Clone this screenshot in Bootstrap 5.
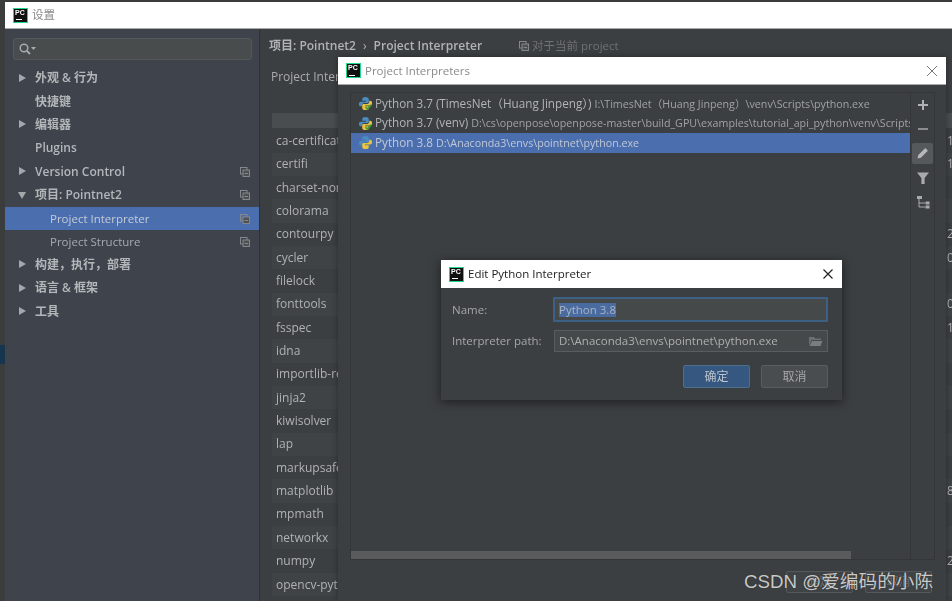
<!DOCTYPE html>
<html lang="zh">
<head>
<meta charset="utf-8">
<title>设置</title>
<link href="https://cdn.jsdelivr.net/npm/bootstrap@5.3.0/dist/css/bootstrap.min.css" rel="stylesheet">
<style>
html,body{height:100%;margin:0;overflow:hidden;background:#3b3d3d;}
body{font-family:"Open Sans","Noto Sans CJK SC",sans-serif;font-size:12px;color:#bbb;position:relative;}
.desk{position:absolute;inset:0;filter:blur(.35px);}
.edge{position:absolute;left:0;top:345px;width:5px;height:19px;background:#16364f;}
.win{position:absolute;left:5px;top:2px;right:0;bottom:0;display:flex;flex-direction:column;}
.ttl{height:27px;background:#fff;color:#8a8a8a;display:flex;align-items:center;padding-left:8px;gap:4px;font-size:11.5px;border-bottom:1px solid #aaa;flex:none;}
.pclogo{width:15px;height:15px;background:#111;border:1px solid #21d789;color:#fff;font:700 7px/8px "Liberation Sans",sans-serif;padding-left:1px;flex:none;position:relative;}
.pclogo::after{content:"";position:absolute;left:2px;bottom:1.5px;width:6px;height:1px;background:#fff;}
.winbody{flex:1;display:flex;min-height:0;}
.side{width:255px;background:#3e434c;border-right:1px solid #2f3133;flex:none;padding-top:9px;}
.srch{margin:0 7px 0 8px;height:22px;border:1px solid #55595c;border-radius:3px;background:#484c4d;display:flex;align-items:center;padding-left:4px;}
.tree{margin-top:6.5px;}
.tn{height:23.35px;display:flex;align-items:center;font-weight:600;color:#b4b7ba;position:relative;padding-left:30px;white-space:nowrap;}
.tn.sub{padding-left:45px;font-weight:400;font-size:11.5px;color:#a8abae;}
.tn.sel{background:#4b6eaf;color:#c4cbd6;}
.arr{position:absolute;left:14px;top:7px;width:0;height:0;border-left:7px solid #a5a8aa;border-top:4.5px solid transparent;border-bottom:4.5px solid transparent;}
.arr.dn{left:13px;top:9px;border-top:7px solid #a5a8aa;border-left:4.5px solid transparent;border-right:4.5px solid transparent;border-bottom:0;}
.cp{position:absolute;right:9px;top:7px;}
.main{flex:1;background:#3c3f41;min-width:0;overflow:hidden;}
.crumb{height:33px;display:flex;align-items:center;padding-left:9px;font-weight:600;color:#b0b2b3;white-space:nowrap;}
.crumb .gt{margin:0 7px;font-weight:400;}
.crumb .hint{font-weight:400;color:#6f7274;margin-left:37px;display:flex;align-items:center;gap:3px;font-size:11.5px;}
.pi{padding-left:11px;height:29px;display:flex;align-items:center;color:#a9abad;}
.pkgs{margin:22px 0 0 12px;}
.phead{height:15px;background:#4a4d4f;margin-bottom:1.3px;}
.prow{height:23.35px;display:flex;align-items:center;padding-left:4px;color:#b0b2b3;white-space:nowrap;overflow:hidden;}
.prow:nth-child(even){background:#3f4345;}
.prow:nth-child(odd){background:#3c3f41;}
.pname{width:671px;flex:none;}
.dlg{position:absolute;background:#3c3f41;}
.dlg1{left:338px;top:57px;right:6px;bottom:0;box-shadow:0 0 6px rgba(0,0,0,.35);}
.dlg1 .ttl{height:28px;}
.xbtn{margin-left:auto;flex:none;}
.dbody{position:relative;height:calc(100% - 28px);padding:7px 11px 41px 12px;}
.lpanel{height:100%;border:1px solid #343638;display:flex;overflow:hidden;position:relative;}
.llist{flex:1;min-width:0;padding-top:1px;}
.irow{height:19.5px;display:flex;align-items:center;padding-left:7px;white-space:nowrap;overflow:hidden;color:#b2b4b5;gap:2px;font-size:11.7px;}
.irow svg{flex:none;}
.irow small{font-size:10.7px;color:#a0a2a3;margin-left:1px;}
.irow.sel{background:#4b6eaf;color:#c0c8d6;}
.irow.sel small{color:#c0c8d6;}
.tools{width:24px;border-left:1px solid #343638;flex:none;display:flex;flex-direction:column;align-items:center;padding-top:1px;}
.tb{width:21px;height:21px;display:flex;align-items:center;justify-content:center;margin-bottom:3.4px;border-radius:2px;}
.tb.on{background:#55595b;}
.hbar{position:absolute;left:0;bottom:0;width:500px;height:8px;background:#595b5d;}
.dlg2{left:441px;top:260px;width:401px;height:140px;box-shadow:0 2px 10px rgba(0,0,0,.55);}
.dlg2 .ttl{height:28px;color:#222;border-bottom:0;padding-left:8px;}
.form2{padding:9px 14px 0 11px;font-size:11.5px;}
.fl{display:flex;align-items:center;color:#a5a7a8;}
.fl label{width:101px;flex:none;margin:0;}
.nameinp{flex:1;height:25px;border:2px solid #3d6185;background:#45494a;display:flex;align-items:center;padding-left:4px;border-radius:1px;}
.nameinp span{color:#a9b4c4;background-color:#4a6b9f;line-height:14px;}
.pathinp{flex:1;height:22px;border:1px solid #5a5d5f;background:#45494a;display:flex;align-items:center;padding:0 4px;justify-content:space-between;color:#aeb0b1;margin-left:1px;}
.acts{display:flex;justify-content:flex-end;gap:11px;margin-top:13px;}
.dbtn{width:67px;height:23px;border-radius:2px;border:1px solid #5a5d5f;background:#4a4d4f;color:#a5a7a8;display:flex;align-items:center;justify-content:center;padding:0;font-size:12px;}
.dbtn.pri{background:#365880;border-color:#4c708c;color:#bbc4cc;}
.ghost{position:absolute;top:571px;width:67px;height:22px;border:1px solid #55585a;border-radius:2px;background:#404345;color:#6a6d6f;font-size:12px;display:flex;align-items:center;justify-content:center;}
.wm{position:absolute;left:744px;top:569px;font:18.7px/26px "Liberation Sans","Noto Sans CJK SC",sans-serif;color:#c9c9c9;text-shadow:0 0 1px #222;white-space:nowrap;}
</style>
</head>
<body>
<div class="desk">
<div class="edge"></div>
<div class="win">
 <div class="ttl"><div class="pclogo">PC</div><span>设置</span></div>
 <div class="winbody">
  <aside class="side">
   <div class="srch"><svg width="18" height="14" viewBox="0 0 18 14"><circle cx="6" cy="6" r="3.8" fill="none" stroke="#a8abad" stroke-width="1.5"/><path d="M9 9l3 3" stroke="#a8abad" stroke-width="1.8"/><path d="M13 5h5l-2.5 3z" fill="#a8abad"/></svg></div>
   <div class="tree">
    <div class="tn"><i class="arr"></i>外观 &amp; 行为</div>
    <div class="tn">快捷键</div>
    <div class="tn"><i class="arr"></i>编辑器</div>
    <div class="tn">Plugins</div>
    <div class="tn"><i class="arr"></i>Version Control<svg class="cp" width="10" height="10" viewBox="0 0 10 10"><use href="#cpy"/></svg></div>
    <div class="tn"><i class="arr dn"></i>项目: Pointnet2<svg class="cp" width="10" height="10" viewBox="0 0 10 10"><use href="#cpy"/></svg></div>
    <div class="tn sub sel">Project Interpreter<svg class="cp" width="10" height="10" viewBox="0 0 10 10"><use href="#cpy"/></svg></div>
    <div class="tn sub">Project Structure<svg class="cp" width="10" height="10" viewBox="0 0 10 10"><use href="#cpy"/></svg></div>
    <div class="tn"><i class="arr"></i>构建，执行，部署</div>
    <div class="tn"><i class="arr"></i>语言 &amp; 框架</div>
    <div class="tn"><i class="arr"></i>工具</div>
   </div>
  </aside>
  <main class="main">
   <div class="crumb">项目: Pointnet2<span class="gt">›</span>Project Interpreter<span class="hint"><svg width="10" height="10" viewBox="0 0 10 10"><use href="#cpy"/></svg>对于当前 project</span></div>
   <div class="pi">Project Interpreter:</div>
   <div class="pkgs">
    <div class="phead"></div>
    <div>
    <div class="prow"><span class="pname">ca-certificates</span><span>1</span></div>
    <div class="prow"><span class="pname">certifi</span><span>1</span></div>
    <div class="prow"><span class="pname">charset-normalizer</span><span></span></div>
    <div class="prow"><span class="pname">colorama</span><span></span></div>
    <div class="prow"><span class="pname">contourpy</span><span>2</span></div>
    <div class="prow"><span class="pname">cycler</span><span>0</span></div>
    <div class="prow"><span class="pname">filelock</span><span></span></div>
    <div class="prow"><span class="pname">fonttools</span><span>0</span></div>
    <div class="prow"><span class="pname">fsspec</span><span>1</span></div>
    <div class="prow"><span class="pname">idna</span><span></span></div>
    <div class="prow"><span class="pname">importlib-resources</span><span></span></div>
    <div class="prow"><span class="pname">jinja2</span><span></span></div>
    <div class="prow"><span class="pname">kiwisolver</span><span></span></div>
    <div class="prow"><span class="pname">lap</span><span></span></div>
    <div class="prow"><span class="pname">markupsafe</span><span></span></div>
    <div class="prow"><span class="pname">matplotlib</span><span>8</span></div>
    <div class="prow"><span class="pname">mpmath</span><span></span></div>
    <div class="prow"><span class="pname">networkx</span><span></span></div>
    <div class="prow"><span class="pname">numpy</span><span>2</span></div>
    <div class="prow"><span class="pname">opencv-python</span><span></span></div>
    </div>
   </div>
  </main>
 </div>
</div>

<section class="dlg dlg1">
 <div class="ttl"><div class="pclogo">PC</div><span>Project Interpreters</span><svg class="xbtn me-2" width="12" height="12" viewBox="0 0 12 12"><path d="M1 1l10 10M11 1L1 11" stroke="#777" stroke-width="1"/></svg></div>
 <div class="dbody">
  <div class="lpanel">
   <div class="llist">
    <div class="irow"><svg width="15" height="15" viewBox="0 0 16 16"><use href="#py"/><use href="#chk"/></svg><span>Python 3.7 (TimesNet（Huang Jinpeng）)</span><small>I:\TimesNet（Huang Jinpeng）\venv\Scripts\python.exe</small></div>
    <div class="irow"><svg width="15" height="15" viewBox="0 0 16 16"><use href="#py"/><use href="#chk"/></svg><span>Python 3.7 (venv)</span><small>D:\cs\openpose\openpose-master\build_GPU\examples\tutorial_api_python\venv\Scripts\python.exe</small></div>
    <div class="irow sel"><svg width="15" height="15" viewBox="0 0 16 16"><use href="#py"/></svg><span>Python 3.8</span><small>D:\Anaconda3\envs\pointnet\python.exe</small></div>
   </div>
   <div class="tools">
    <div class="tb"><svg width="12" height="12" viewBox="0 0 12 12"><path d="M6 1v10M1 6h10" stroke="#b0b2b3" stroke-width="2"/></svg></div>
    <div class="tb"><svg width="12" height="12" viewBox="0 0 12 12"><path d="M1 6h10" stroke="#8a8c8d" stroke-width="2"/></svg></div>
    <div class="tb on"><svg width="14" height="14" viewBox="0 0 14 14"><path d="M1.500 12.500l.8-3.400 7-7 2.600 2.600-7 7z" fill="#b6b8b9"/></svg></div>
    <div class="tb"><svg width="14" height="14" viewBox="0 0 14 14"><path d="M1 1.500h12L8.600 7v6H5.400V7z" fill="#a8aaab"/></svg></div>
    <div class="tb"><svg width="14" height="14" viewBox="0 0 14 14"><path d="M1 1h5v3H1z" fill="#a8aaab"/><path d="M3 4v8h6M3 8h6" fill="none" stroke="#a8aaab"/><path d="M9.500 6.500h4v3h-4zM9.500 10.500h4v3h-4z" fill="#a8aaab"/></svg></div>
   </div>
   <div class="hbar"></div>
  </div>
 </div>
</section>
<div class="ghost" style="left:786px">确定</div>
<div class="ghost" style="left:865px">取消</div>

<section class="dlg dlg2">
 <div class="ttl"><div class="pclogo">PC</div><span>Edit Python Interpreter</span><svg class="xbtn me-2" width="12" height="12" viewBox="0 0 12 12"><path d="M1.500 1.500l9 9M10.500 1.500l-9 9" stroke="#222" stroke-width="1.200"/></svg></div>
 <div class="form2">
  <div class="fl mb-2"><label>Name:</label><div class="nameinp"><span>Python 3.8</span></div></div>
  <div class="fl"><label>Interpreter path:</label><div class="pathinp"><span>D:\Anaconda3\envs\pointnet\python.exe</span><svg width="15" height="12" viewBox="0 0 15 12"><path d="M1 2h5l1 1.500h6V5H3.500L1 10.500z" fill="#6d7072"/><path d="M4 6h10.500l-2 5H1.500z" fill="#7a7d7f"/></svg></div></div>
  <div class="acts"><button class="dbtn pri" type="button">确定</button><button class="dbtn" type="button">取消</button></div>
 </div>
</section>
</div>
<div class="wm">CSDN @爱编码的小陈</div>

<svg width="0" height="0" class="position-absolute">
 <defs>
  <g id="cpy" fill="none" stroke="#85888a"><rect x=".5" y=".5" width="6.500" height="6.500"/><rect x="3" y="3" width="6.500" height="6.500" fill="#4e5153"/><path d="M4.500 6.500h3.500"/></g>
  <g id="py"><path d="M8 1C5 1 4.500 2 4.500 3.500V5H8.500v1H3C1.500 6 1 7.200 1 8.500S1.500 11 3 11h1.500V9.500C4.500 8.300 5.500 7.500 6.500 7.500h3.500C11 7.500 11.500 6.800 11.500 6V3.500C11.500 2 10.500 1 8 1z" fill="#4b8bbe"/><path d="M8 15c3 0 3.500-1 3.500-2.500V11H7.500v-1H13c1.500 0 2-1.200 2-2.500S14.500 5 13 5h-1v1.500c0 1.200-1 2-2 2H6c-1 0-1.500.7-1.500 1.500v2.500C4.500 14 5.500 15 8 15z" fill="#e8c33f"/></g>
  <path id="chk" d="M8 12l2 2 4-4.500" fill="none" stroke="#3f9c35" stroke-width="1.800"/>
 </defs>
</svg>
<script src="https://cdn.jsdelivr.net/npm/bootstrap@5.3.0/dist/js/bootstrap.bundle.min.js"></script>
</body>
</html>
